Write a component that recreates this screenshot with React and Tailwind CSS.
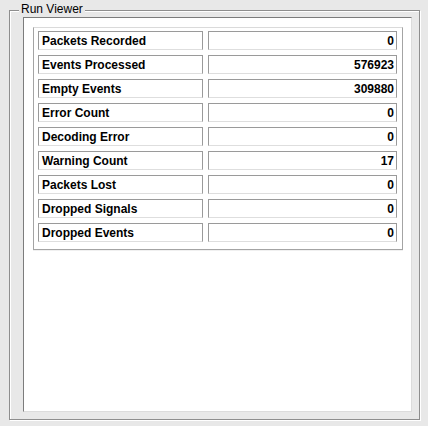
import React from 'react';

const stats = [
  ['Packets Recorded', 0],
  ['Events Processed', 576923],
  ['Empty Events', 309880],
  ['Error Count', 0],
  ['Decoding Error', 0],
  ['Warning Count', 17],
  ['Packets Lost', 0],
  ['Dropped Signals', 0],
  ['Dropped Events', 0],
];

function StatRow({ label, value }) {
  return (
    <div className="flex gap-[5px] h-[19px]">
      <div className="w-[165px] h-full bg-white border border-[#9a9a9a] border-b-[#dedede] pl-[3px] flex items-center text-[12px] font-bold leading-none">
        {label}
      </div>
      <div className="w-[189px] h-full bg-white border border-[#9a9a9a] border-b-[#dedede] pr-[2px] flex items-center justify-end text-[12px] font-bold leading-none">
        {value}
      </div>
    </div>
  );
}

export default function App() {
  return (
    <div
      className="w-[428px] h-[426px] bg-[#e8e8e8] pl-[9px] pt-[10px] text-black"
      style={{ fontFamily: '"Liberation Sans", Arial, sans-serif' }}
    >
      {/* group box */}
      <div className="relative w-[411px] h-[410px] border border-[#8e8e8e] shadow-[1px_1px_0_#fff,inset_1px_1px_0_#fff] pl-[13px] pt-[6px]">
        <span className="absolute left-[9px] top-[-9px] px-[2px] bg-[#e8e8e8] text-[12px] leading-[14px]">
          Run Viewer
        </span>
        {/* white panel */}
        <div className="w-[389px] h-[395px] bg-white border border-[#7c7c7c] border-r-[#dcdcdc] border-b-[#dcdcdc] pl-[9px] pt-[9px]">
          {/* table frame */}
          <div className="w-[370px] h-[223px] border border-[#a4a4a4] border-t-[#dadada] shadow-[0_1px_0_#f0f0f0] pl-[4px] pt-[3px] flex flex-col gap-[5px]">
            {stats.map(([label, value]) => (
              <StatRow key={label} label={label} value={value} />
            ))}
          </div>
        </div>
      </div>
    </div>
  );
}
